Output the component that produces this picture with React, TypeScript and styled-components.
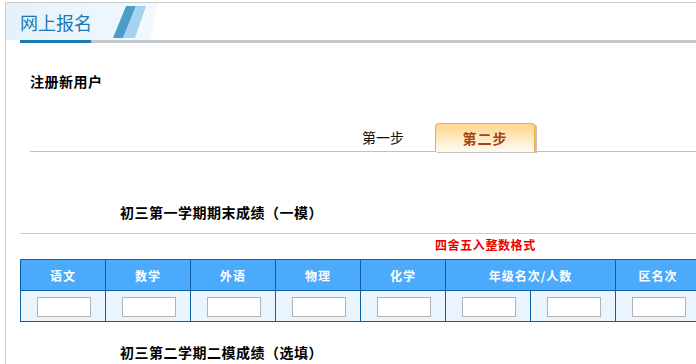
import { FC } from 'react';
import styled, { createGlobalStyle } from 'styled-components';

const GlobalStyle = createGlobalStyle`
  html, body {
    margin: 0;
    padding: 0;
    overflow: hidden;
    background: #fff;
  }
  body {
    font-family: "Noto Sans CJK SC", "Liberation Sans", sans-serif;
    color: #000;
  }
`;

const Viewport = styled.div`
  width: 696px;
  height: 364px;
  overflow: hidden;
`;

const Panel = styled.div`
  margin: 2px 0 0 5px;
  width: 760px;
  min-height: 380px;
  border-top: 1px solid #cccccc;
  border-left: 1px solid #cccccc;
`;

const Header = styled.div`
  display: flex;
  align-items: center;
  height: 37px;
`;

const Band = styled.div`
  display: flex;
  align-items: center;
  width: 152px;
  height: 37px;
  padding-left: 14px;
  box-sizing: border-box;
  background: linear-gradient(to right, #e4f1fb, #f3f9fe);
  clip-path: polygon(0 0, 100% 0, 95% 100%, 0 100%);
`;

const Title = styled.h1`
  margin: 0;
  width: 93px;
  font-size: 18px;
  font-weight: 400;
  line-height: 22px;
  color: #1b79b5;
  white-space: nowrap;
`;

const Underline = styled.div`
  display: flex;
  height: 3px;
  margin-left: 14px;
  background: #c4c8c8;
  &::before {
    content: '';
    width: 71px;
    background: #1a78b2;
  }
`;

const Heading = styled.h2<{ $indent: number; $top: number }>`
  margin: ${(p) => p.$top}px 0 0;
  padding-left: ${(p) => p.$indent}px;
  font-size: 14px;
  line-height: 16px;
  font-weight: 700;
  letter-spacing: 0.5px;
  white-space: nowrap;
`;

const TabBar = styled.div`
  display: flex;
  align-items: flex-end;
  gap: 2px;
  height: 28px;
  margin: 34px 0 0 24px;
  padding-left: 303px;
  border-bottom: 1px solid #f9bd3c;
`;

const Tab = styled.div<{ $active?: boolean }>`
  display: flex;
  align-items: center;
  justify-content: center;
  width: 100px;
  height: 28px;
  box-sizing: border-box;
  font-size: 14px;
  white-space: nowrap;
  ${(p) =>
    p.$active
      ? `
    margin-bottom: -1px;
    height: 29px;
    border: 1px solid #f6ac35;
    border-bottom: none;
    border-radius: 4px 4px 0 0;
    background: linear-gradient(#ffd58c, #fff6e6 85%, #fffaf2);
    box-shadow: 2px 1px 0 #c2c2c2;
    color: #a3450c;
    font-weight: 700;
    letter-spacing: 1px;
  `
      : `
    color: #111;
  `}
`;

const Rule = styled.div`
  height: 1px;
  margin: 13px 0 0 14px;
  background: #cccccc;
`;

const Notice = styled.div`
  margin-top: 4px;
  padding-left: 429px;
  font-size: 12px;
  line-height: 14px;
  font-weight: 700;
  color: #ee0000;
  letter-spacing: 0.6px;
  white-space: nowrap;
`;

const Grid = styled.div`
  display: grid;
  grid-template-columns: repeat(8, 84px);
  grid-auto-rows: 30px;
  gap: 1px;
  width: max-content;
  margin: 7px 0 0 14px;
  padding: 1px;
  background: #0d5ea5;
`;

const HeadCell = styled.div<{ $span?: number }>`
  grid-column: span ${(p) => p.$span ?? 1};
  display: flex;
  align-items: center;
  justify-content: center;
  background: #4caafc;
  color: #fff;
  font-size: 12px;
  font-weight: 700;
  letter-spacing: 1px;
  white-space: nowrap;
`;

const Cell = styled.div`
  display: flex;
  align-items: center;
  justify-content: center;
  background: #e9f4fe;
`;

const ScoreInput = styled.input`
  width: 54px;
  height: 20px;
  box-sizing: border-box;
  margin: 1px 0 0 1px;
  padding: 0 2px;
  border: 1px solid #b3b3b3;
  background: #fff;
  outline: none;
`;

const Stripes: FC = () => (
  <svg width="34" height="32" viewBox="0 0 34 32">
    <polygon points="13,0 23,0 10,32 0,32" fill="#4b9cc9" />
    <polygon points="23,0 33,0 22,32 10,32" fill="#a6d3ef" />
  </svg>
);

const heads = ['语文', '数学', '外语', '物理', '化学'];

export default function App() {
  return (
    <Viewport>
      <GlobalStyle />
      <Panel>
        <Header>
          <Band>
            <Title>网上报名</Title>
            <Stripes />
          </Band>
        </Header>
        <Underline />

        <Heading $indent={24} $top={30}>
          注册新用户
        </Heading>

        <TabBar>
          <Tab>第一步</Tab>
          <Tab $active>第二步</Tab>
        </TabBar>

        <Heading $indent={114} $top={52}>
          初三第一学期期末成绩（一模）
        </Heading>
        <Rule />
        <Notice>四舍五入整数格式</Notice>

        <Grid>
          {heads.map((h) => (
            <HeadCell key={h}>{h}</HeadCell>
          ))}
          <HeadCell $span={2}>年级名次/人数</HeadCell>
          <HeadCell>区名次</HeadCell>
          {Array.from({ length: 8 }).map((_, i) => (
            <Cell key={i}>
              <ScoreInput type="text" />
            </Cell>
          ))}
        </Grid>

        <Heading $indent={114} $top={22}>
          初三第二学期二模成绩（选填）
        </Heading>
      </Panel>
    </Viewport>
  );
}
